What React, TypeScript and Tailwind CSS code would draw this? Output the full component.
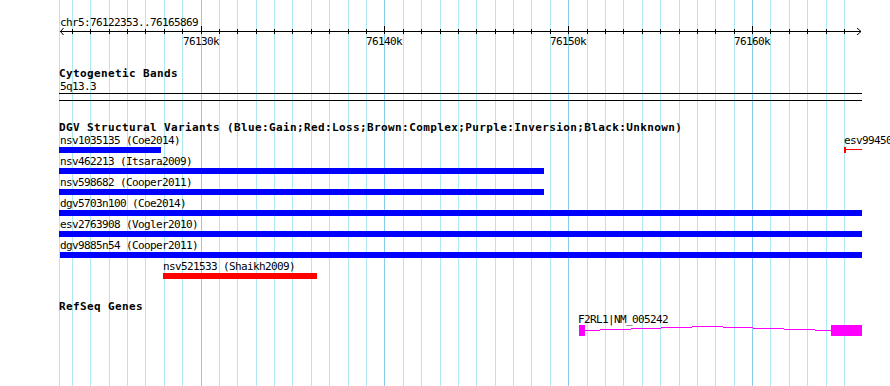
import React from 'react'

// genome browser panel: chr5:76122353..76165869
const SCALE = 18.387 // px per kb
const ORIGIN = 201 // x of 76130k

const grid = [
  { x: 59, major: false },
  ...Array.from({ length: 43 }, (_, i) => {
    const k = i - 7
    return { x: Math.floor(ORIGIN + k * SCALE), major: k % 10 === 0 }
  }),
]

const majors = [
  { x: 201, label: '76130k' },
  { x: 384, label: '76140k' },
  { x: 568, label: '76150k' },
  { x: 752, label: '76160k' },
]

type Feature = {
  label: string
  start: number
  end: number
  labelX: number
  color: string
  stub?: boolean
}

const BLUE = 'bg-[#0000ff]'
const RED = 'bg-[#ff0000]'

const variantRows: Feature[][] = [
  [
    { label: 'nsv1035135 (Coe2014)', start: 59, end: 161, labelX: 60, color: BLUE },
    { label: 'esv9945066 (Kidd2010)', start: 844, end: 862, labelX: 844, color: RED, stub: true },
  ],
  [{ label: 'nsv462213 (Itsara2009)', start: 59, end: 544, labelX: 60, color: BLUE }],
  [{ label: 'nsv598682 (Cooper2011)', start: 59, end: 544, labelX: 60, color: BLUE }],
  [{ label: 'dgv5703n100 (Coe2014)', start: 59, end: 862, labelX: 60, color: BLUE }],
  [{ label: 'esv2763908 (Vogler2010)', start: 59, end: 862, labelX: 60, color: BLUE }],
  [{ label: 'dgv9885n54 (Cooper2011)', start: 60, end: 862, labelX: 60, color: BLUE }],
  [{ label: 'nsv521533 (Shaikh2009)', start: 163, end: 317, labelX: 163, color: RED }],
]

const intron: [number, number, number][] = [
  [585, 600, 5],
  [600, 631, 4],
  [631, 661, 3],
  [661, 692, 2],
  [692, 723, 1],
  [723, 753, 2],
  [753, 784, 3],
  [784, 815, 4],
  [815, 831, 5],
]

const labelCls = 'h-[13px] text-[11px] leading-[13px] tracking-[-0.62px] whitespace-nowrap'
const titleCls = 'h-[13px] text-[11px] leading-[13px] font-bold tracking-[0.38px] whitespace-nowrap'

function GridLines() {
  return (
    <svg className="absolute inset-0 pointer-events-none" width={890} height={386} shapeRendering="crispEdges">
      {grid.map((g, i) => (
        <line
          key={i}
          x1={g.x + 0.5}
          x2={g.x + 0.5}
          y1={0}
          y2={386}
          stroke={g.major ? '#88cdf0' : '#aee9f1'}
          strokeWidth={1}
        />
      ))}
    </svg>
  )
}

function Ruler() {
  return (
    <>
      <svg className="absolute left-0 top-[9px]" width={890} height={12}>
        <g shapeRendering="crispEdges" stroke="#000" strokeWidth={1}>
          <line x1={60} x2={861} y1={6.5} y2={6.5} />
          {grid.slice(1).map((g, i) => (
            <line key={i} x1={g.x + 0.5} x2={g.x + 0.5} y1={g.major ? 1 : 4} y2={9} />
          ))}
        </g>
        <polyline points="63.5,3 60.5,6.5 63.5,10" fill="none" stroke="#000" strokeWidth={1} />
        <polyline points="857,3 861,6.5 857,10" fill="none" stroke="#000" strokeWidth={1} />
      </svg>
      {majors.map(m => (
        <div key={m.label} className={`absolute top-[19px] ${labelCls}`} style={{ left: m.x - 18 }}>
          {m.label}
        </div>
      ))}
    </>
  )
}

function VariantRow({ features }: { features: Feature[] }) {
  return (
    <div className="relative h-[21px]">
      {features.map(f => (
        <React.Fragment key={f.label}>
          <div className={`absolute top-0 ${labelCls}`} style={{ left: f.labelX }}>
            {f.label}
          </div>
          {f.stub ? (
            <>
              <div className={`absolute top-[13px] h-[6px] w-[2px] ${f.color}`} style={{ left: f.start }} />
              <div
                className={`absolute top-[15px] h-px ${f.color}`}
                style={{ left: f.start + 2, width: f.end - f.start - 2 }}
              />
            </>
          ) : (
            <div
              className={`absolute top-[13px] h-[6px] ${f.color}`}
              style={{ left: f.start, width: f.end - f.start }}
            />
          )}
        </React.Fragment>
      ))}
    </div>
  )
}

function GeneRow() {
  return (
    <div className="relative h-[23px]">
      <div className={`absolute top-0 left-[578px] ${labelCls}`}>F2RL1|NM_005242</div>
      <svg className="absolute top-[12px] left-[579px]" width={283} height={11} shapeRendering="crispEdges">
        <rect x={0} y={0} width={6} height={11} fill="#ff00ff" />
        <rect x={252} y={0} width={31} height={11} fill="#ff00ff" />
        {intron.map(([a, b, y], i) => (
          <line key={i} x1={a - 579} x2={b - 579} y1={y + 0.5} y2={y + 0.5} stroke="#ff00ff" strokeWidth={1} />
        ))}
      </svg>
    </div>
  )
}

export default function App() {
  return (
    <div className="relative w-[890px] h-[386px] overflow-hidden bg-white text-black font-['DejaVu_Sans_Mono',monospace]">
      <GridLines />
      <div className="relative flex flex-col pt-[16px]">
        {/* ruler */}
        <div className="relative h-[51px]">
          <div className={`${labelCls} pl-[60px]`}>chr5:76122353..76165869</div>
          <Ruler />
        </div>

        {/* Cytogenetic Bands */}
        <div className={`${titleCls} pl-[59px]`}>Cytogenetic Bands</div>
        <div className={`${labelCls} pl-[60px]`}>5q13.3</div>
        <div className="ml-[59px] w-[803px] h-px bg-black" />
        <div className="ml-[59px] mt-[6px] w-[803px] h-px bg-black" />

        {/* DGV */}
        <div className={`${titleCls} pl-[59px] mt-[20px]`}>
          DGV Structural Variants (Blue:Gain;Red:Loss;Brown:Complex;Purple:Inversion;Black:Unknown)
        </div>
        {variantRows.map((row, i) => (
          <VariantRow key={i} features={row} />
        ))}

        {/* RefSeq */}
        <div className="h-[12px] text-[11px] leading-[12px] font-bold tracking-[0.38px] whitespace-nowrap pl-[59px] mt-[20px]">
          RefSeq Genes
        </div>
        <GeneRow />
      </div>
    </div>
  )
}
